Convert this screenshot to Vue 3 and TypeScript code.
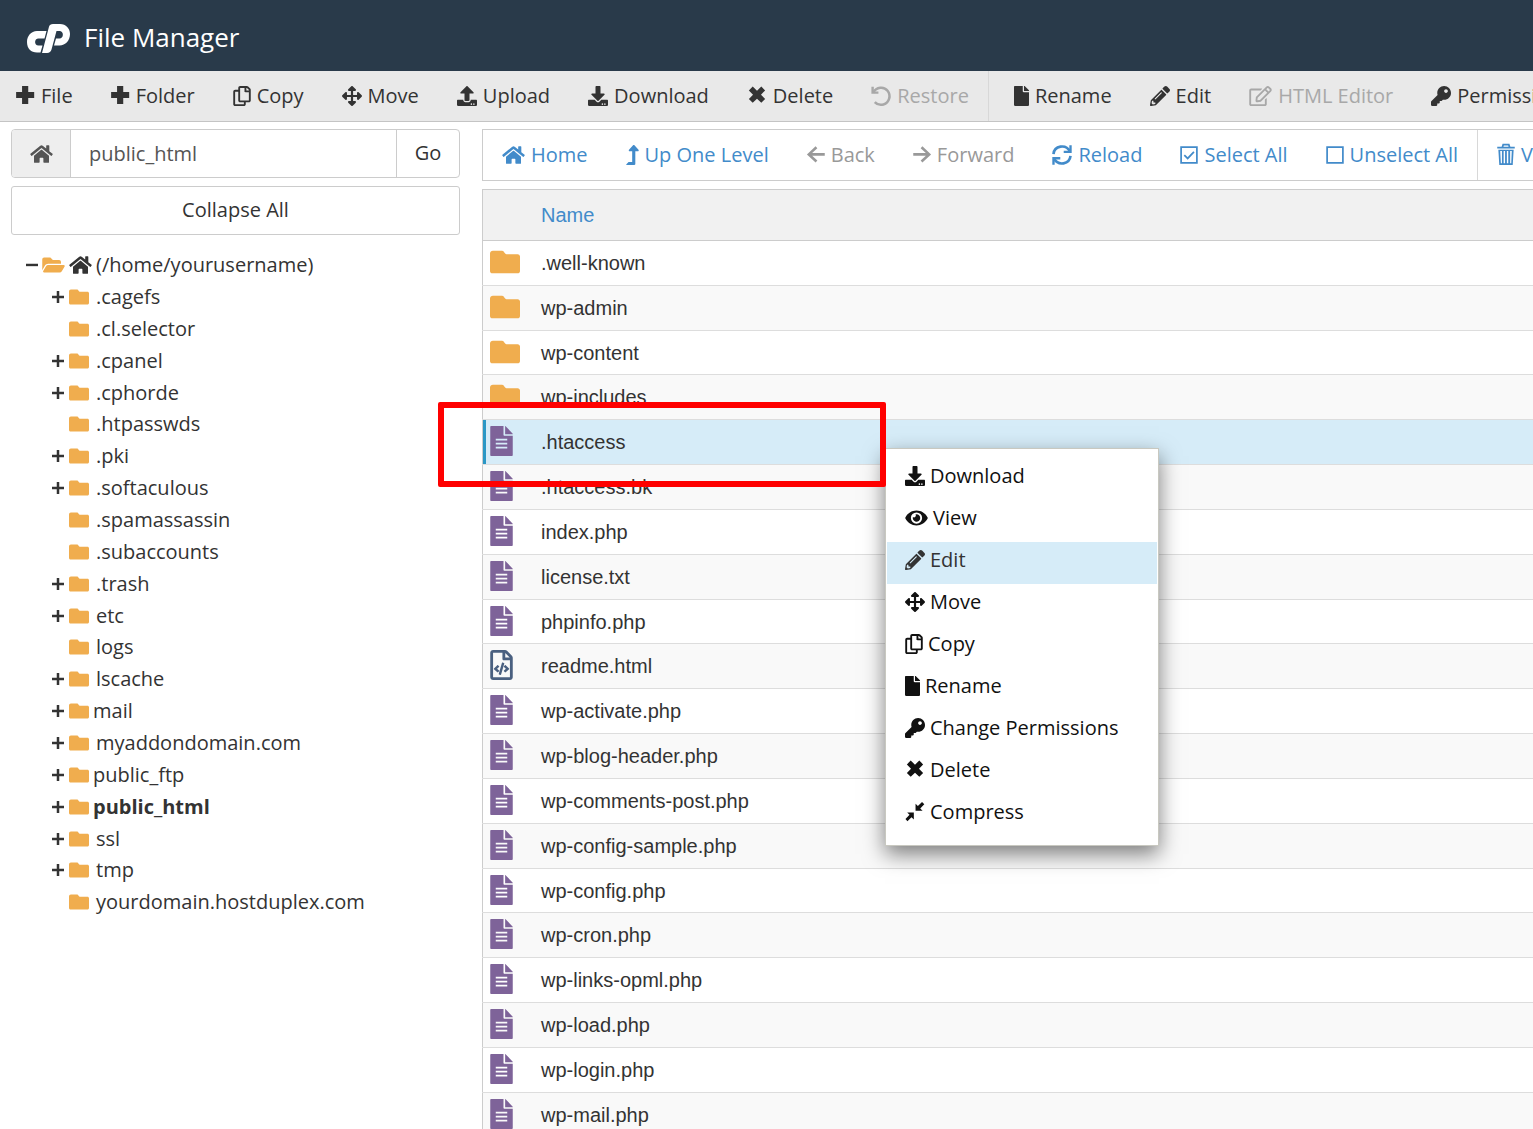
<script setup lang="ts">
import { h, ref, type FunctionalComponent } from 'vue'

interface Glyph {
  w: number
  fill?: string
  line?: string
  stroke?: number
}

interface Action {
  icon: string
  label: string
  disabled?: boolean
}

interface TreeNode {
  name: string
  leaf?: boolean
  tight?: boolean
  current?: boolean
}

interface Entry {
  name: string
  kind: 'folder' | 'doc' | 'code'
}

/* All glyphs share a 512 unit height; w is the advance width. */
const glyphs: Record<string, Glyph> = {
  plus: { w: 480, fill: 'M152 2h158v150h152v158H310v152H152V310H0V152h152z' },
  copy: { w: 448, fill: 'M433.9 65.9l-51.8-51.8A48 48 0 0 0 348.1 0H176c-26.5 0-48 21.5-48 48v48H48c-26.5 0-48 21.5-48 48v320c0 26.5 21.5 48 48 48h224c26.5 0 48-21.5 48-48v-48h80c26.5 0 48-21.5 48-48V99.900a48 48 0 0 0-14.100-34zM266 464H54a6 6 0 0 1-6-6V150a6 6 0 0 1 6-6h74v224c0 26.500 21.500 48 48 48h96v42a6 6 0 0 1-6 6zm128-96H182a6 6 0 0 1-6-6V54a6 6 0 0 1 6-6h106v88c0 13.300 10.700 24 24 24h88v202a6 6 0 0 1-6 6zm6-256h-64V48h9.600c1.600 0 3.100.6 4.200 1.800l48.400 48.400a6 6 0 0 1 1.800 4.200V112z' },
  move: { w: 512, fill: 'M352.201 425.775l-79.196 79.196c-9.373 9.373-24.568 9.373-33.941 0l-79.196-79.196c-15.119-15.119-4.411-40.971 16.971-40.970h51.162L228 284H127.196v51.162c0 21.382-25.851 32.090-40.971 16.971L7.029 272.937c-9.373-9.373-9.373-24.569 0-33.941L86.225 159.800c15.119-15.119 40.971-4.411 40.971 16.971V228H228V127.196h-51.230c-21.382 0-32.090-25.851-16.971-40.971l79.196-79.196c9.373-9.373 24.568-9.373 33.941 0l79.196 79.196c15.119 15.119 4.411 40.971-16.971 40.971h-51.162V228h100.804v-51.162c0-21.382 25.851-32.090 40.970-16.971l79.196 79.196c9.373 9.373 9.373 24.569 0 33.941L425.773 352.200c-15.119 15.119-40.971 4.411-40.970-16.971V284H284v100.804h51.230c21.382 0 32.090 25.851 16.971 40.971z' },
  upload: { w: 512, fill: 'M296 384h-80c-13.300 0-24-10.700-24-24V192h-87.700c-17.800 0-26.700-21.500-14.100-34.100L242.300 5.700c7.500-7.500 19.800-7.500 27.300 0l152.200 152.200c12.600 12.600 3.700 34.100-14.100 34.100H320v168c0 13.300-10.700 24-24 24zm216-8v112c0 13.300-10.700 24-24 24H24c-13.300 0-24-10.700-24-24V376c0-13.300 10.700-24 24-24h136v8c0 30.900 25.100 56 56 56h80c30.900 0 56-25.100 56-56v-8h136c13.300 0 24 10.700 24 24zm-124 88c0-11-9-20-20-20s-20 9-20 20 9 20 20 20 20-9 20-20zm64 0c0-11-9-20-20-20s-20 9-20 20 9 20 20 20 20-9 20-20z' },
  download: { w: 512, fill: 'M216 0h80c13.300 0 24 10.700 24 24v168h87.700c17.800 0 26.700 21.500 14.100 34.100L269.700 378.300c-7.500 7.500-19.800 7.500-27.300 0L90.100 226.100c-12.600-12.600-3.700-34.100 14.100-34.100H192V24c0-13.300 10.700-24 24-24zm296 376v112c0 13.300-10.700 24-24 24H24c-13.300 0-24-10.700-24-24V376c0-13.300 10.700-24 24-24h146.700l49 49c20.100 20.100 52.500 20.100 72.600 0l49-49H488c13.300 0 24 10.700 24 24zm-124 88c0-11-9-20-20-20s-20 9-20 20 9 20 20 20 20-9 20-20zm64 0c0-11-9-20-20-20s-20 9-20 20 9 20 20 20 20-9 20-20z' },
  times: { w: 512, fill: 'M146 14l110 106L366 14l98 98-106 110 106 110-98 98-110-106-110 106-98-98 106-110L48 112z' },
  undo: { w: 512, fill: 'M10 20h62v118h118v62H10z', line: 'M54 170C140 20 330 0 424 120C520 240 470 430 320 472C230 496 150 470 96 412', stroke: 64 },
  file: { w: 384, fill: 'M224 136V0H24C10.700 0 0 10.700 0 24v464c0 13.300 10.700 24 24 24h336c13.300 0 24-10.700 24-24V160H248c-13.200 0-24-10.800-24-24zm160-14.100v6.100H256V0h6.100c6.400 0 12.500 2.500 17 7l97.900 98c4.500 4.500 7 10.600 7 16.900z' },
  doc: { w: 384, fill: 'M226 150V0H14C6 0 0 6 0 14v484c0 8 6 14 14 14h356c8 0 14-6 14-14V168H244c-10 0-18-8-18-18zM384 132v10H254V0h4zM94 218h196v30H94zM94 286h196v30H94zM94 354h196v30H94z' },
  code: { w: 384, fill: 'M149.900 349.100l-.2-.2-32.800-28.900 32.800-28.900c3.600-3.200 4-8.800.8-12.400l-.2-.2-17.400-18.600c-3.400-3.600-9-3.700-12.400-.4l-57.700 54.100c-3.700 3.500-3.700 9.400 0 12.800l57.700 54.100c1.600 1.500 3.800 2.400 6 2.400 2.400 0 4.800-1 6.400-2.800l17.400-18.600c3.300-3.500 3.100-9.100-.4-12.400zm220-251.200L286 14C277 5 264.800 0 252.100 0H48C21.500 0 0 21.500 0 48v416c0 26.500 21.500 48 48 48h288c26.500 0 48-21.500 48-48V131.900c0-12.700-5.100-25-14.100-34zM256 51.900l76.100 76.100H256zM336 464H48V48h160v104c0 13.300 10.700 24 24 24h104zM209.600 214c-4.700-1.400-9.500 1.300-10.900 6L144 408.100c-1.400 4.700 1.300 9.600 6 10.900l24.400 7.100c4.700 1.400 9.600-1.400 10.900-6L240 231.900c1.400-4.700-1.300-9.600-6-10.900zm24.500 76.900l.2.2 32.800 28.900-32.800 28.900c-3.600 3.200-4 8.800-.8 12.400l.2.2 17.400 18.600c3.300 3.500 8.900 3.700 12.400.4l57.700-54.100c3.700-3.500 3.700-9.400 0-12.800l-57.700-54.100c-3.500-3.300-9.100-3.200-12.400.4l-17.400 18.600c-3.300 3.500-3.100 9.100.4 12.400z' },
  pencil: { w: 512, fill: 'M497.900 142.100l-46.100 46.100c-4.700 4.700-12.300 4.700-17 0l-111-111c-4.700-4.700-4.700-12.300 0-17l46.100-46.100c18.700-18.700 49.100-18.700 67.900 0l60.100 60.100c18.800 18.700 18.800 49.100 0 67.900zM284.200 99.800L21.600 362.400.4 483.900c-2.900 16.400 11.400 30.600 27.800 27.800l121.500-21.300 262.600-262.600c4.700-4.700 4.700-12.300 0-17l-111-111c-4.800-4.700-12.400-4.700-17.100 0zM124.100 339.900c-5.500-5.500-5.500-14.300 0-19.800l154-154c5.500-5.500 14.300-5.500 19.800 0s5.500 14.300 0 19.800l-154 154c-5.500 5.500-14.300 5.500-19.800 0zM88 424h48v36.300l-64.500 11.300-31.100-31.100L51.700 376H88v48z' },
  edit: { w: 576, fill: 'M402.300 344.900l32-32c5-5 13.700-1.500 13.700 5.700V464c0 26.500-21.500 48-48 48H48c-26.500 0-48-21.500-48-48V112c0-26.500 21.500-48 48-48h273.500c7.100 0 10.700 8.600 5.700 13.700l-32 32c-1.500 1.500-3.500 2.300-5.700 2.300H48v352h352V350.500c0-2.100.8-4.100 2.300-5.600zm156.600-201.800L296.300 405.700l-90.400 10c-26.200 2.900-48.500-19.200-45.600-45.600l10-90.400L432.900 17.100c22.900-22.900 59.900-22.900 82.700 0l43.200 43.200c22.900 22.900 22.900 60 .1 82.800zM460.100 174L402 115.900 216.200 301.800l-7.300 65.300 65.300-7.300L460.100 174zm64.800-79.700l-43.200-43.200c-4.100-4.100-10.800-4.100-14.800 0L436 82l58.100 58.100 30.900-30.900c4-4.200 4-10.800-.1-14.900z' },
  key: { w: 512, fill: 'M512 176C512 273.200 433.200 352 336 352c-11.200 0-22.200-1-32.800-3l-24 27a24 24 0 0 1-18 8H224v40c0 13.300-10.700 24-24 24h-40v40c0 13.300-10.700 24-24 24H24c-13.300 0-24-10.700-24-24v-78c0-6.400 2.500-12.500 7-17l161.800-161.800C163.100 213.800 160 195.300 160 176 160 78.800 238.800 0 336 0c97.500 0 176 78.500 176 176zM336 128c0 26.500 21.500 48 48 48s48-21.500 48-48-21.500-48-48-48-48 21.500-48 48z' },
  home: { w: 576, fill: 'M280.370 148.260L96 300.110V464a16 16 0 0 0 16 16l112.060-.29a16 16 0 0 0 15.920-16V368a16 16 0 0 1 16-16h64a16 16 0 0 1 16 16v95.640a16 16 0 0 0 16 16.050L464 480a16 16 0 0 0 16-16V300L295.670 148.260a12.190 12.190 0 0 0-15.300 0zM571.600 251.470L488 182.560V44.050a12 12 0 0 0-12-12h-56a12 12 0 0 0-12 12v72.610L318.470 43a48 48 0 0 0-61 0L4.340 251.470a12 12 0 0 0-1.600 16.900l25.500 31A12 12 0 0 0 45.150 301l235.220-193.740a12.190 12.190 0 0 1 15.300 0L530.900 301a12 12 0 0 0 16.900-1.600l25.500-31a12 12 0 0 0-1.700-16.930z' },
  up: { w: 320, fill: 'M313.600 119.700L209.600 7.700c-9.500-10.200-25.700-10.200-35.200 0L70.400 119.700C56.200 135 67.100 160 88 160H152v272H68a12 12 0 0 0-8.500 3.500l-56 56C-4 499.100 1.300 512 12 512H208c13.300 0 24-10.700 24-24V160h64c20.900 0 31.900-25 17.600-40.300z' },
  left: { w: 448, line: 'M236 56L40 240L236 424M48 240H448', stroke: 66 },
  right: { w: 448, line: 'M212 56L408 240L212 424M400 240H0', stroke: 66 },
  sync: { w: 512, fill: 'M504 8v196H300v-60h144V8zM8 504V308h204v60H68v136z', line: 'M38 232C60 20 350-40 462 168M474 280C452 492 162 552 50 344', stroke: 68 },
  checked: { w: 448, line: 'M22 54H426V458H22ZM104 258L190 344L350 178', stroke: 44 },
  unchecked: { w: 448, line: 'M22 54H426V458H22Z', stroke: 44 },
  trash: { w: 448, fill: 'M0 46h112l24-76h176l24 76h112v44H0zM158 46h132l-12-34H170zM28 122h392l-24 388H52zM76 156l16 314h28V156zM164 156v314h36V156zM246 156v314h36V156zM330 156v314h28l14-314z' },
  eye: { w: 576, fill: 'M572.500 241.400C518.300 135.600 410.900 64 288 64S57.700 135.600 3.500 241.400a32.400 32.400 0 0 0 0 29.200C57.700 376.400 165.100 448 288 448s230.300-71.600 284.500-177.400a32.400 32.400 0 0 0 0-29.200zM288 400a144 144 0 1 1 144-144 143.900 143.900 0 0 1-144 144zm0-240a95.300 95.300 0 0 0-25.300 3.800 47.900 47.900 0 0 1-66.900 66.900A95.800 95.800 0 1 0 288 160z' },
  compress: { w: 512, fill: 'M270 222V42l60 58L436 0l58 58-104 106 60 58zM226 266v180l-60-58L62 490l-50-52 104-112-60-60z' },
  folder: { w: 512, fill: 'M472 122H280c-30 0-40-58-72-58H48C21.500 64 0 85.500 0 112v296c0 22 18 40 40 40h432c22 0 40-18 40-40V162c0-22-18-40-40-40z' },
  folderOpen: { w: 576, fill: 'M572.700 292.100L500.300 416.200A64 64 0 0 1 445 448H45c-18.500 0-30-20.100-20.700-36.100l72.400-124.200A64 64 0 0 1 152 256h400c18.500 0 30 20.100 20.700 36.100zM152 224h328v-48c0-26.500-21.500-48-48-48H272l-64-64H48C21.500 64 0 85.500 0 112v278l69-118.400C86.200 242.200 118 224 152 224z' },
  expand: { w: 308, fill: 'M122 102h64v122h122v62H186v122h-64V286H0v-62h122z' },
  collapse: { w: 308, fill: 'M0 224h308v62H0z' },
}

const Icon: FunctionalComponent<{ name: string; size?: number }> = (props) => {
  const g = glyphs[props.name]
  const size = props.size ?? 20
  return h(
    'svg',
    {
      width: Math.round((g.w * size) / 512),
      height: size,
      viewBox: `0 0 ${g.w} 512`,
      overflow: 'visible',
      'aria-hidden': 'true',
      style: 'flex: none; display: block',
    },
    [
      g.fill ? h('path', { d: g.fill, fill: 'currentColor', 'fill-rule': 'evenodd' }) : null,
      g.line ? h('path', { d: g.line, fill: 'none', stroke: 'currentColor', 'stroke-width': g.stroke }) : null,
    ],
  )
}
Icon.props = ['name', 'size']

const path = ref('public_html')

const fileActions: Action[] = [
  { icon: 'plus', label: 'File' },
  { icon: 'plus', label: 'Folder' },
  { icon: 'copy', label: 'Copy' },
  { icon: 'move', label: 'Move' },
  { icon: 'upload', label: 'Upload' },
  { icon: 'download', label: 'Download' },
  { icon: 'times', label: 'Delete' },
  { icon: 'undo', label: 'Restore', disabled: true },
]

const editActions: Action[] = [
  { icon: 'file', label: 'Rename' },
  { icon: 'pencil', label: 'Edit' },
  { icon: 'edit', label: 'HTML Editor', disabled: true },
  { icon: 'key', label: 'Permissions' },
]

const navActions: Action[] = [
  { icon: 'home', label: 'Home' },
  { icon: 'up', label: 'Up One Level' },
  { icon: 'left', label: 'Back', disabled: true },
  { icon: 'right', label: 'Forward', disabled: true },
  { icon: 'sync', label: 'Reload' },
  { icon: 'checked', label: 'Select All' },
  { icon: 'unchecked', label: 'Unselect All' },
]

const trashActions: Action[] = [{ icon: 'trash', label: 'View Trash' }]

const menuActions: Action[] = [
  { icon: 'download', label: 'Download' },
  { icon: 'eye', label: 'View' },
  { icon: 'pencil', label: 'Edit' },
  { icon: 'move', label: 'Move' },
  { icon: 'copy', label: 'Copy' },
  { icon: 'file', label: 'Rename' },
  { icon: 'key', label: 'Change Permissions' },
  { icon: 'times', label: 'Delete' },
  { icon: 'compress', label: 'Compress' },
]

const tree: TreeNode[] = [
  { name: '.cagefs' },
  { name: '.cl.selector', leaf: true },
  { name: '.cpanel' },
  { name: '.cphorde' },
  { name: '.htpasswds', leaf: true },
  { name: '.pki' },
  { name: '.softaculous' },
  { name: '.spamassassin', leaf: true },
  { name: '.subaccounts', leaf: true },
  { name: '.trash' },
  { name: 'etc' },
  { name: 'logs', leaf: true },
  { name: 'lscache' },
  { name: 'mail', tight: true },
  { name: 'myaddondomain.com' },
  { name: 'public_ftp', tight: true },
  { name: 'public_html', tight: true, current: true },
  { name: 'ssl' },
  { name: 'tmp' },
  { name: 'yourdomain.hostduplex.com', leaf: true },
]

const entries: Entry[] = [
  { name: '.well-known', kind: 'folder' },
  { name: 'wp-admin', kind: 'folder' },
  { name: 'wp-content', kind: 'folder' },
  { name: 'wp-includes', kind: 'folder' },
  { name: '.htaccess', kind: 'doc' },
  { name: '.htaccess.bk', kind: 'doc' },
  { name: 'index.php', kind: 'doc' },
  { name: 'license.txt', kind: 'doc' },
  { name: 'phpinfo.php', kind: 'doc' },
  { name: 'readme.html', kind: 'code' },
  { name: 'wp-activate.php', kind: 'doc' },
  { name: 'wp-blog-header.php', kind: 'doc' },
  { name: 'wp-comments-post.php', kind: 'doc' },
  { name: 'wp-config-sample.php', kind: 'doc' },
  { name: 'wp-config.php', kind: 'doc' },
  { name: 'wp-cron.php', kind: 'doc' },
  { name: 'wp-links-opml.php', kind: 'doc' },
  { name: 'wp-load.php', kind: 'doc' },
  { name: 'wp-login.php', kind: 'doc' },
  { name: 'wp-mail.php', kind: 'doc' },
]

const selected = ref('.htaccess')
const hovered = ref('Edit')
</script>

<template>
  <div class="app">
    <header class="masthead">
      <svg class="logo" width="43" height="29" viewBox="27 24 43 29" aria-hidden="true">
        <path
          fill="#fff"
          d="M46.500 31H37C31 31 27 36 27 42C27 48.500 31 52.500 37 52.500H40.500L42.500 45.500H38.500C34 45.500 34 38.500 38.500 38.500H44.500ZM53 24H60C66 24 70 28.500 70 34C70 40.500 65.500 45.500 59.500 45.500H54L56 38.500H59.500C64 38.500 64 31 59.500 31H56.500L51.500 49.500C50.800 51.800 49.500 53 47 53H42L49 26.700C49.500 25 50.800 24 53 24Z"
        />
      </svg>
      <h1>File Manager</h1>
    </header>

    <nav class="toolbar" aria-label="File actions">
      <div class="group">
        <button v-for="a in fileActions" :key="a.label" type="button" class="tool" :disabled="a.disabled">
          <Icon :name="a.icon" />{{ a.label }}
        </button>
      </div>
      <div class="group divided">
        <button v-for="a in editActions" :key="a.label" type="button" class="tool" :disabled="a.disabled">
          <Icon :name="a.icon" />{{ a.label }}
        </button>
      </div>
    </nav>

    <div class="body">
      <aside class="sidebar">
        <form class="location" @submit.prevent>
          <label for="path" aria-label="Home directory"><Icon name="home" /></label>
          <input id="path" v-model="path" type="text" />
          <button type="submit">Go</button>
        </form>
        <button type="button" class="collapse">Collapse All</button>
        <div class="tree">
          <div class="node root">
            <button type="button" class="toggle" aria-label="Collapse"><Icon name="collapse" /></button>
            <span class="folder"><Icon name="folderOpen" /></span>
            <Icon name="home" />
            <a href="#home">(/home/yourusername)</a>
          </div>
          <ul>
            <li v-for="n in tree" :key="n.name" class="node" :class="{ tight: n.tight, current: n.current }">
              <span v-if="n.leaf" class="toggle"></span>
              <button v-else type="button" class="toggle" aria-label="Expand"><Icon name="expand" /></button>
              <span class="folder"><Icon name="folder" /></span>
              <a :href="'#' + n.name">{{ n.name }}</a>
            </li>
          </ul>
        </div>
      </aside>

      <main class="content">
        <nav class="navbar" aria-label="Navigation">
          <div class="group">
            <button v-for="a in navActions" :key="a.label" type="button" class="tool" :disabled="a.disabled">
              <Icon :name="a.icon" />{{ a.label }}
            </button>
          </div>
          <div class="group divided">
            <button v-for="a in trashActions" :key="a.label" type="button" class="tool">
              <Icon :name="a.icon" />{{ a.label }}
            </button>
          </div>
        </nav>

        <table class="files">
          <thead>
            <tr>
              <th class="kind"></th>
              <th>Name</th>
            </tr>
          </thead>
          <tbody>
            <tr v-for="e in entries" :key="e.name" :class="{ selected: e.name === selected }" @click="selected = e.name">
              <td class="kind" :class="e.kind">
                <Icon :name="e.kind" :size="30" />
              </td>
              <td>{{ e.name }}</td>
            </tr>
          </tbody>
        </table>
      </main>
    </div>

    <div class="highlight"></div>

    <ul class="menu">
      <li v-for="a in menuActions" :key="a.label">
        <button type="button" :class="{ active: a.label === hovered }" @mouseenter="hovered = a.label">
          <Icon :name="a.icon" />{{ a.label }}
        </button>
      </li>
    </ul>
  </div>
</template>

<style>
body {
  margin: 0;
  background: #fff;
}
</style>

<style scoped>
.app {
  position: relative;
  height: 100vh;
  overflow: hidden;
  box-sizing: border-box;
  font-family: 'Open Sans', 'Noto Sans', sans-serif;
  font-size: 20px;
  line-height: 28px;
  color: #333;
}

button,
input {
  font: inherit;
  color: inherit;
  margin: 0;
  padding: 0;
  border: 0;
  background: none;
  box-sizing: border-box;
}

ul {
  list-style: none;
  margin: 0;
  padding: 0;
}

a {
  color: inherit;
  text-decoration: none;
}

.masthead {
  display: flex;
  align-items: center;
  gap: 14px;
  height: 71px;
  padding: 6px 27px 0;
  box-sizing: border-box;
  background: #293a4a;
  color: #fff;
}

.masthead h1 {
  margin: 0 0 4px;
  font-size: 26px;
  line-height: 36px;
  font-weight: 400;
}

.toolbar,
.navbar {
  display: flex;
  overflow: hidden;
  box-sizing: border-box;
}

.toolbar {
  height: 51px;
  background: #e9e9e9;
  border-bottom: 1px solid #c4c4c4;
}

.toolbar .divided {
  padding-left: 6px;
}

.navbar {
  height: 52px;
  border: 1px solid #ccc;
  border-right: 0;
  color: #428bca;
}

.group {
  display: flex;
  flex: none;
}

.divided {
  border-left: 1px solid #d8d8d8;
}

.tool {
  display: flex;
  align-items: center;
  gap: 6px;
  padding: 0 19px;
  white-space: nowrap;
}

.toolbar .group:first-child .tool:first-child {
  padding-left: 16px;
}

.tool:disabled {
  color: #999;
}

.toolbar .tool:disabled {
  color: #a8a8a8;
}

.body {
  display: flex;
  gap: 22px;
  padding: 7px 0 0 11px;
}

.sidebar {
  flex: 0 0 449px;
}

.location {
  display: flex;
  height: 49px;
  margin-bottom: 8px;
  border: 1px solid #ccc;
  border-radius: 4px;
  box-sizing: border-box;
  overflow: hidden;
}

.location label {
  display: flex;
  align-items: center;
  justify-content: center;
  width: 58px;
  background: #eee;
  border-right: 1px solid #ccc;
  color: #555;
}

.location input {
  flex: 1;
  min-width: 0;
  padding: 0 18px;
  color: #555;
  outline: none;
}

.location button {
  width: 63px;
  padding-bottom: 2px;
  border-left: 1px solid #ccc;
}

.collapse {
  width: 100%;
  height: 49px;
  padding-bottom: 2px;
  border: 1px solid #ccc;
  border-radius: 3px;
}

.tree {
  padding: 14px 0 0 15px;
}

.tree ul {
  padding-left: 26px;
}

.node {
  display: flex;
  align-items: center;
  gap: 5px;
  height: 32px;
}

.node:nth-child(7n + 4) {
  height: 31px;
}

.root {
  gap: 4px;
}

li.node a {
  margin-left: 2px;
}

li.tight a {
  margin-left: -1px;
}

.node.current {
  font-weight: 700;
}

.toggle {
  width: 12px;
  height: 20px;
}

.folder {
  color: #f0ad4e;
}

.content {
  flex: 1;
  min-width: 0;
}

.files {
  width: 100%;
  margin-top: 8px;
  border-collapse: collapse;
  border: 1px solid #ccc;
  border-right: 0;
  font-family: 'Liberation Sans', Arial, sans-serif;
}

.files th,
.files td {
  padding: 0;
  text-align: left;
  font-weight: 400;
  line-height: 24px;
}

.files th {
  height: 50px;
  background: #f1f1f1;
  border-bottom: 1px solid #ccc;
  color: #428bca;
}

.files td {
  height: 44px;
  border-bottom: 1px solid #ddd;
}

.files tr:nth-child(6n + 3) td {
  height: 43px;
}

.files tbody tr:nth-child(even) {
  background: #f9f9f9;
}

.files .kind {
  width: 51px;
  padding: 0 0 2px 7px;
  box-sizing: content-box;
}

.files td.kind {
  height: 42px;
}

.files tr:nth-child(6n + 3) td.kind {
  height: 41px;
}

.files th.kind {
  height: 48px;
}

.files .folder {
  color: #f0ad4e;
}

.files .doc {
  color: #7e6399;
}

.files .code {
  color: #4a6080;
}

.files tbody .selected {
  background: #d6ecf8;
}

.selected .kind {
  box-shadow: inset 3px 0 #2a97c5;
}

.highlight {
  position: absolute;
  left: 438px;
  top: 402px;
  width: 448px;
  height: 85px;
  border: 6px solid #f00;
  border-radius: 2px;
  box-sizing: border-box;
  pointer-events: none;
  z-index: 2;
}

.menu {
  position: absolute;
  left: 885px;
  top: 448px;
  width: 274px;
  padding: 9px 1px;
  border: 1px solid #c8c8c0;
  box-sizing: border-box;
  background: #fff;
  box-shadow: 0 8px 20px rgba(0, 0, 0, 0.5);
  color: #111;
}

.menu button {
  display: flex;
  align-items: center;
  gap: 5px;
  width: 100%;
  height: 42px;
  padding: 0 0 6px 18px;
}

.menu .active {
  background: #d6ecf8;
  color: #333;
}
</style>
